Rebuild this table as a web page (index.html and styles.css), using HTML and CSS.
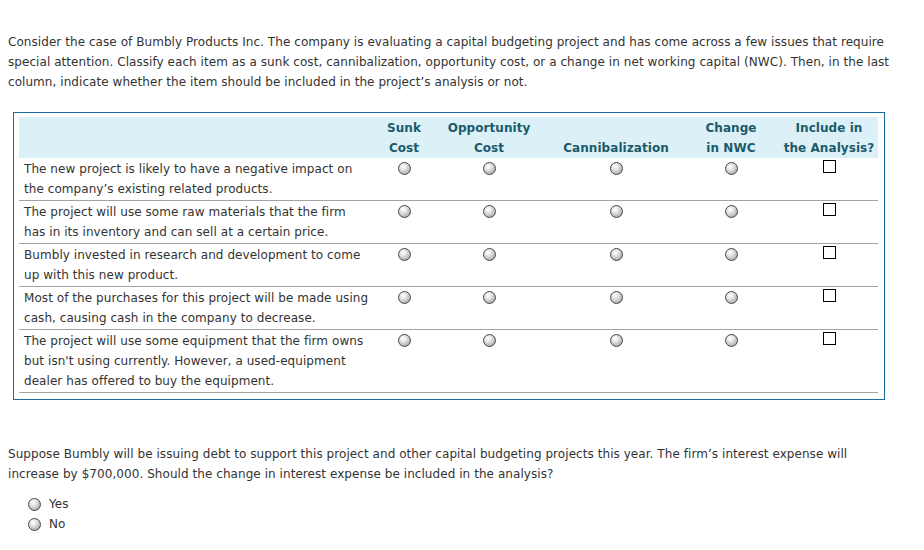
FILE: index.html
```html
<!DOCTYPE html>
<html>
<head>
<meta charset="utf-8">
<link rel="stylesheet" href="styles.css">
</head>
<body>
<div class="page">
  <p class="intro">Consider the case of Bumbly Products Inc. The company is evaluating a capital budgeting project and has come across a few issues that require special attention. Classify each item as a sunk cost, cannibalization, opportunity cost, or a change in net working capital (NWC). Then, in the last column, indicate whether the item should be included in the project’s analysis or not.</p>

  <div class="box">
    <table class="grid">
      <colgroup>
        <col class="c-desc"><col class="c-sunk"><col class="c-opp"><col class="c-can"><col class="c-nwc"><col class="c-inc">
      </colgroup>
      <thead>
        <tr>
          <th class="desc"></th>
          <th>Sunk<br>Cost</th>
          <th>Opportunity<br>Cost</th>
          <th>Cannibalization</th>
          <th>Change<br>in NWC</th>
          <th>Include in<br>the Analysis?</th>
        </tr>
      </thead>
      <tbody>
        <tr>
          <td class="desc">The new project is likely to have a negative impact on<br>the company’s existing related products.</td>
          <td><span class="radio"></span></td><td><span class="radio"></span></td><td><span class="radio"></span></td><td><span class="radio"></span></td><td><span class="check"></span></td>
        </tr>
        <tr>
          <td class="desc">The project will use some raw materials that the firm<br>has in its inventory and can sell at a certain price.</td>
          <td><span class="radio"></span></td><td><span class="radio"></span></td><td><span class="radio"></span></td><td><span class="radio"></span></td><td><span class="check"></span></td>
        </tr>
        <tr>
          <td class="desc">Bumbly invested in research and development to come<br>up with this new product.</td>
          <td><span class="radio"></span></td><td><span class="radio"></span></td><td><span class="radio"></span></td><td><span class="radio"></span></td><td><span class="check"></span></td>
        </tr>
        <tr>
          <td class="desc">Most of the purchases for this project will be made using<br>cash, causing cash in the company to decrease.</td>
          <td><span class="radio"></span></td><td><span class="radio"></span></td><td><span class="radio"></span></td><td><span class="radio"></span></td><td><span class="check"></span></td>
        </tr>
        <tr>
          <td class="desc">The project will use some equipment that the firm owns<br>but isn't using currently. However, a used-equipment<br>dealer has offered to buy the equipment.</td>
          <td><span class="radio"></span></td><td><span class="radio"></span></td><td><span class="radio"></span></td><td><span class="radio"></span></td><td><span class="check"></span></td>
        </tr>
      </tbody>
    </table>
  </div>

  <p class="question">Suppose Bumbly will be issuing debt to support this project and other capital budgeting projects this year. The firm’s interest expense will increase by $700,000. Should the change in interest expense be included in the analysis?</p>

  <ul class="choices">
    <li><span class="radio"></span><span class="label">Yes</span></li>
    <li><span class="radio"></span><span class="label">No</span></li>
  </ul>
</div>
</body>
</html>
```
FILE: styles.css
```css
html, body {
  margin: 0;
  padding: 0;
  background: #ffffff;
}

body {
  font-family: "DejaVu Sans", Verdana, sans-serif;
  font-size: 12px;
  line-height: 20px;
  letter-spacing: 0.06px;
  color: #333333;
}

.page {
  padding: 32px 8px 0 8px;
}

.intro {
  margin: 0;
  width: 890px;
}

.box {
  margin: 20px 0 0 5px;
  width: 860px;
  border: 1px solid #1a6aa3;
  padding: 4px 5px 6px 5px;
}

.grid {
  border-collapse: collapse;
  table-layout: fixed;
  width: 859px;
}

.c-desc { width: 361px; }
.c-sunk { width: 48px; }
.c-opp { width: 122px; }
.c-can { width: 132px; }
.c-nwc { width: 98px; }
.c-inc { width: 98px; }

.grid thead tr {
  background: #dcf0f8;
}

.grid th {
  font-weight: bold;
  color: #1b5a6b;
  text-align: center;
  vertical-align: bottom;
  padding: 1px 0 0 0;
  white-space: nowrap;
}

.grid td {
  text-align: center;
  vertical-align: top;
  padding: 1px 0 1px 0;
  border-bottom: 1px solid #a3a3a3;
}

.grid td.desc {
  text-align: left;
  padding-left: 5px;
  white-space: nowrap;
}

.radio {
  display: inline-block;
  width: 11px;
  height: 11px;
  border: 1px solid #4a4a4a;
  border-radius: 50%;
  background: radial-gradient(circle at 38% 32%, #ffffff 0%, #ececec 25%, #bdbdbd 65%, #8c8c8c 100%);
  vertical-align: middle;
  margin-top: -3px;
}

.check {
  display: inline-block;
  width: 11px;
  height: 11px;
  border: 1px solid #000000;
  background: #ffffff;
  vertical-align: middle;
  margin-top: -6px;
}

.question {
  margin: 44px 0 0 0;
  width: 890px;
}

.choices {
  list-style: none;
  margin: 10px 0 0 0;
  padding: 0 0 0 20px;
}

.choices li {
  display: flex;
  align-items: center;
  height: 20px;
}

.choices .radio {
  margin-top: 0;
}

.choices .label {
  margin-left: 8px;
}
```
